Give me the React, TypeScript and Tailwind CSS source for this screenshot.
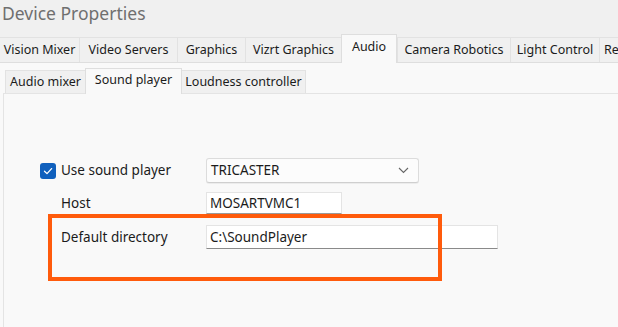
import React from "react";

const topTabs = [
  { label: "Vision Mixer", w: 80 },
  { label: "Video Servers", w: 98 },
  { label: "Graphics", w: 68 },
  { label: "Vizrt Graphics", w: 96 },
  { label: "Audio", w: 56, selected: true },
  { label: "Camera Robotics", w: 113 },
  { label: "Light Control", w: 89 },
];

export default function App() {
  return (
    <div
      className="relative w-[618px] h-[327px] overflow-hidden bg-[#f0f0f0] flex flex-col text-[#1b1b1b]"
      style={{ fontFamily: '"Noto Sans", "Open Sans", sans-serif' }}
    >
      <div className="h-[34px] shrink-0 pl-[2px] pt-[2px] text-[17.5px] leading-[23px] text-[#6f6f6f]">
        Device Properties
      </div>

      <div className="flex items-end shrink-0 ml-[-1px]">
        {topTabs.map((t) =>
          t.selected ? (
            <div
              key={t.label}
              style={{ width: t.w }}
              className="relative z-10 -mb-px h-[29px] shrink-0 border-x border-t border-[#dedede] bg-[#f9f9f9] flex items-center justify-center pb-[4px] text-[12.5px]"
            >
              {t.label}
            </div>
          ) : (
            <div
              key={t.label}
              style={{ width: t.w }}
              className="h-[25px] shrink-0 border-l border-t border-[#e2e2e2] bg-[#f0f0f0] flex items-center justify-center text-[12.5px] whitespace-nowrap"
            >
              {t.label}
            </div>
          )
        )}
        <div className="w-[60px] h-[25px] shrink-0 border-l border-t border-[#e2e2e2] bg-[#f0f0f0] flex items-center pl-[4px] text-[12.5px] whitespace-nowrap">
          Re
        </div>
      </div>

      <div className="flex-1 flex flex-col bg-[#f9f9f9] border-t border-[#dedede]">
        <div className="h-[30px] shrink-0 flex items-end pl-[5px]">
          <div className="w-[80px] h-[23px] border-l border-t border-[#e2e2e2] bg-[#f0f0f0] flex items-center justify-center text-[12.5px]">
            Audio mixer
          </div>
          <div className="relative z-10 -mb-px w-[97px] h-[26px] border-x border-t border-[#dedede] bg-[#f9f9f9] flex items-center justify-center pb-[3px] text-[12.5px]">
            Sound player
          </div>
          <div className="w-[124px] h-[23px] border-r border-t border-[#e2e2e2] bg-[#f0f0f0] flex items-center justify-center text-[12.5px]">
            Loudness controller
          </div>
        </div>

        <div className="flex-1 ml-[3px] border-l border-t border-[#e4e4e4] pt-[64px] pl-[36px] text-[13.5px]">
          <div className="flex items-center h-[25px]">
            <div className="w-[166px] flex items-center">
              <div className="w-[16px] h-[16px] rounded-[3px] bg-[#1060bd] flex items-center justify-center">
                <svg width="10" height="10" viewBox="0 0 10 10" fill="none">
                  <path d="M1.5 5.2 L4 7.6 L8.6 2.6" stroke="white" strokeWidth="1.3" strokeLinecap="round" strokeLinejoin="round" />
                </svg>
              </div>
              <span className="ml-[5px]">Use sound player</span>
            </div>
            <div className="w-[213px] h-[25px] rounded-[3px] border border-[#dcdcdc] border-b-[#cfcfcf] bg-[#fcfcfc] flex items-center justify-between pl-[4px] pr-[9px] shadow-[0_1px_0_rgba(0,0,0,0.05)]">
              <span>TRICASTER</span>
              <svg width="11" height="7" viewBox="0 0 11 7" fill="none">
                <path d="M1 1 L5.5 5.5 L10 1" stroke="#666" strokeWidth="1.1" />
              </svg>
            </div>
          </div>

          <div className="flex items-center h-[22px] mt-[9px]">
            <div className="w-[166px] pl-[21px]">Host</div>
            <div className="w-[136px] h-[22px] border border-[#e4e4e4] border-b-[#9a9a9a] bg-white flex items-center pl-[3px]">
              MOSARTVMC1
            </div>
          </div>

          <div className="flex items-center h-[24px] mt-[11px]">
            <div className="w-[166px] pl-[21px]">Default directory</div>
            <div className="w-[292px] h-[24px] border border-[#e4e4e4] border-b-[#8a8a8a] bg-white flex items-center pl-[3px]">
              C:\SoundPlayer
            </div>
          </div>
        </div>
      </div>

      <div className="absolute left-[48px] top-[214px] w-[394px] h-[67px] border-4 border-[#ff5b0c] pointer-events-none" />
    </div>
  );
}
